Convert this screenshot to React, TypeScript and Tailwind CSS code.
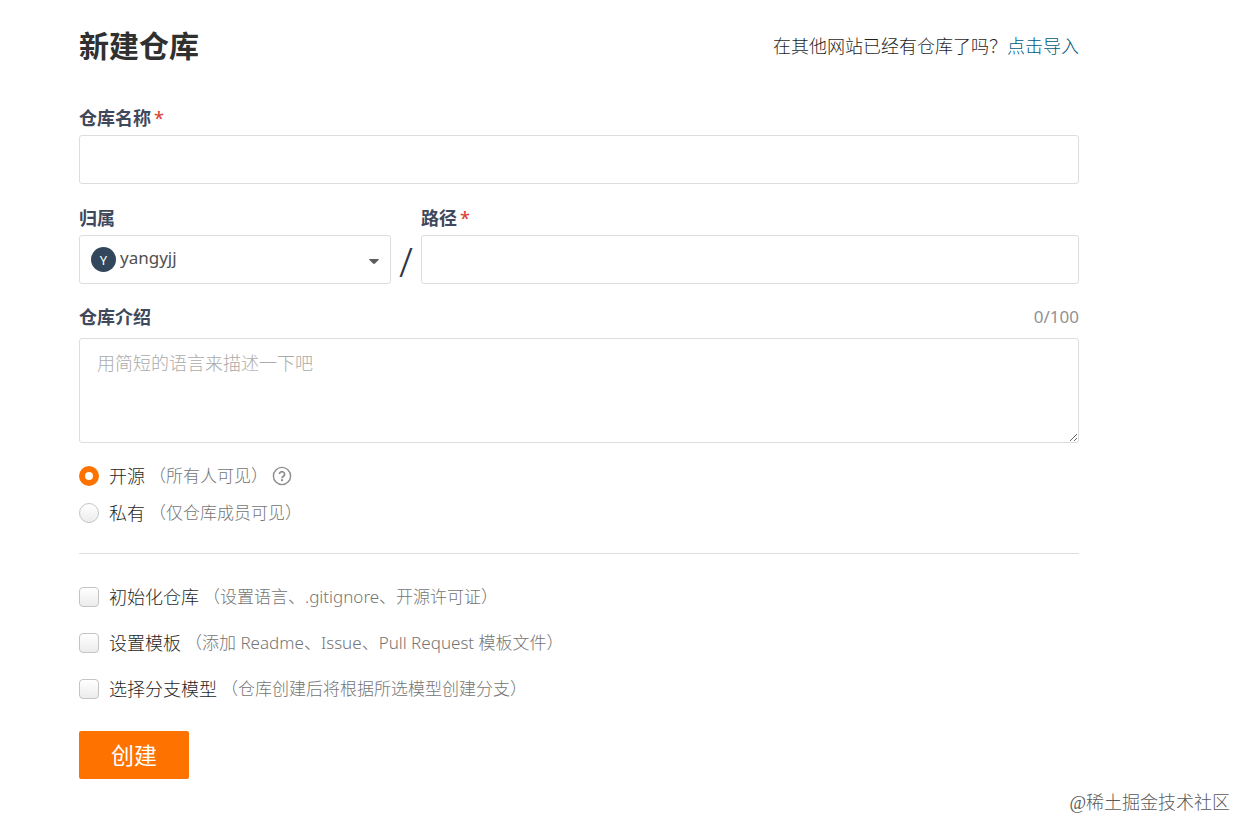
import { useState } from 'react';

const options = [
  { id: 'init', label: '初始化仓库', hint: '（设置语言、.gitignore、开源许可证）' },
  { id: 'template', label: '设置模板', hint: '（添加 Readme、Issue、Pull Request 模板文件）' },
  { id: 'branch', label: '选择分支模型', hint: '（仓库创建后将根据所选模型创建分支）' },
];

export default function App() {
  const [visibility, setVisibility] = useState('public');
  const [intro, setIntro] = useState('');

  return (
    <div className="bg-white font-['Noto_Sans','Noto_Sans_CJK_SC',sans-serif] text-[18px] leading-6 text-[#1f1f1f]">
      <form className="pt-7 pr-[158px] pl-[79px]" onSubmit={(e) => e.preventDefault()}>
        <div className="flex items-center justify-between">
          <h1 className="text-[30px] leading-9 font-bold text-[#303030]">新建仓库</h1>
          <p className="font-light">
            在其他网站已经有仓库了吗？
            <a href="#import" className="text-[#005980]">点击导入</a>
          </p>
        </div>

        {/* Name */}
        <div className="mt-[42px]">
          <FieldLabel htmlFor="name" text="仓库名称" required />
          <TextInput id="name" />
        </div>

        {/* Owner / path */}
        <div className="mt-[22px] flex items-end">
          <div className="w-[312px]">
            <FieldLabel htmlFor="owner" text="归属" />
            <div className="mt-[5px] flex h-[49px] items-center rounded-[3px] border border-[#dcddde] px-[11px]">
              <span className="flex size-[25px] items-center justify-center rounded-full bg-[#32475b] text-[13px] text-white">Y</span>
              <select id="owner" className="ml-1 h-full flex-1 appearance-none bg-transparent pb-[3px] text-[17px] text-[#505050] outline-none">
                <option>yangyjj</option>
              </select>
              <svg width="10" height="5" viewBox="0 0 10 5" className="pointer-events-none mt-1" aria-hidden="true">
                <path d="M0 0.5Q0 0 1 0H9Q10 0 10 0.5L6 4.6Q5 5.3 4 4.6Z" fill="#5c5c5c" />
              </svg>
            </div>
          </div>
          <span className="w-[30px] text-center text-[40px] leading-[44px] font-light text-[#303646]">/</span>
          <div className="flex-1">
            <FieldLabel htmlFor="path" text="路径" required />
            <TextInput id="path" />
          </div>
        </div>

        {/* Description */}
        <div className="mt-[21px]">
          <div className="flex items-center justify-between">
            <FieldLabel htmlFor="intro" text="仓库介绍" />
            <span className="text-[17px] text-[#919191]">{intro.length}/100</span>
          </div>
          <textarea
            id="intro"
            maxLength={100}
            value={intro}
            onChange={(e) => setIntro(e.target.value)}
            placeholder="用简短的语言来描述一下吧"
            className="mt-[9px] block h-[105px] w-full rounded-[3px] border border-[#dcddde] px-[17px] py-3 font-light outline-none placeholder:text-[#ababab]"
          />
        </div>

        {/* Visibility */}
        <div className="mt-[21px] space-y-[13px]">
          <div className="flex items-center">
            <Radio id="public" checked={visibility === 'public'} onSelect={setVisibility} label="开源" hint="（所有人可见）" />
            <button type="button" aria-label="帮助" className="ml-1 text-[#8c8c8c]">
              <svg width="20" height="20" viewBox="0 0 20 20" fill="none" stroke="currentColor" strokeWidth="1.4">
                <circle cx="10" cy="10" r="8.6" />
                <path d="M7.4 8.1a2.6 2.5 0 1 1 4.1 2.1c-.9.6-1.5 1-1.5 2" strokeWidth="1.7" />
                <circle cx="10" cy="14.2" r="1.1" fill="currentColor" stroke="none" />
              </svg>
            </button>
          </div>
          <div className="flex items-center">
            <Radio id="private" checked={visibility === 'private'} onSelect={setVisibility} label="私有" hint="（仅仓库成员可见）" />
          </div>
        </div>

        <hr className="mt-7 border-[#dfdfdf]" />

        <div className="mt-[31px] space-y-[22px]">
          {options.map((o) => (
            <div key={o.id} className="flex items-center">
              <input
                id={o.id}
                type="checkbox"
                className="size-5 appearance-none rounded-[4px] border border-[#c4c4c4] bg-linear-to-b from-white to-[#ececec] checked:border-[#fe7300] checked:from-[#fe7300] checked:to-[#fe7300]"
              />
              <OptionLabel htmlFor={o.id} label={o.label} hint={o.hint} />
            </div>
          ))}
        </div>

        <button type="submit" className="mt-[30px] block h-12 w-[110px] rounded-[2px] bg-[#fe7300] text-[23px] text-white">
          创建
        </button>
      </form>

      <p className="mt-3 pr-[7px] text-right font-['Liberation_Serif','Noto_Sans_CJK_SC',serif] font-light text-[#5a5a5a]">@稀土掘金技术社区</p>
    </div>
  );
}

function FieldLabel({ htmlFor, text, required }: { htmlFor: string; text: string; required?: boolean }) {
  return (
    <label htmlFor={htmlFor} className="block font-bold text-[#40485b]">
      {text}
      {required && <span className="ml-[3px] font-medium text-[#db4437]">*</span>}
    </label>
  );
}

function TextInput({ id }: { id: string }) {
  return <input id={id} type="text" className="mt-[5px] block h-[49px] w-full rounded-[3px] border border-[#dcddde] px-[17px] outline-none" />;
}

function OptionLabel({ htmlFor, label, hint }: { htmlFor: string; label: string; hint: string }) {
  return (
    <label htmlFor={htmlFor} className="flex items-center gap-1 pl-[10px] font-light">
      {label}
      <span className="text-[17px] text-[#757575]">{hint}</span>
    </label>
  );
}

function Radio({
  id,
  checked,
  onSelect,
  label,
  hint,
}: {
  id: string;
  checked: boolean;
  onSelect: (id: string) => void;
  label: string;
  hint: string;
}) {
  return (
    <>
      <input
        id={id}
        type="radio"
        name="visibility"
        checked={checked}
        onChange={() => onSelect(id)}
        className="size-5 appearance-none rounded-full border border-[#c4c4c4] bg-linear-to-b from-white to-[#ececec] checked:border-[6px] checked:border-[#fe7300] checked:to-white"
      />
      <OptionLabel htmlFor={id} label={label} hint={hint} />
    </>
  );
}
